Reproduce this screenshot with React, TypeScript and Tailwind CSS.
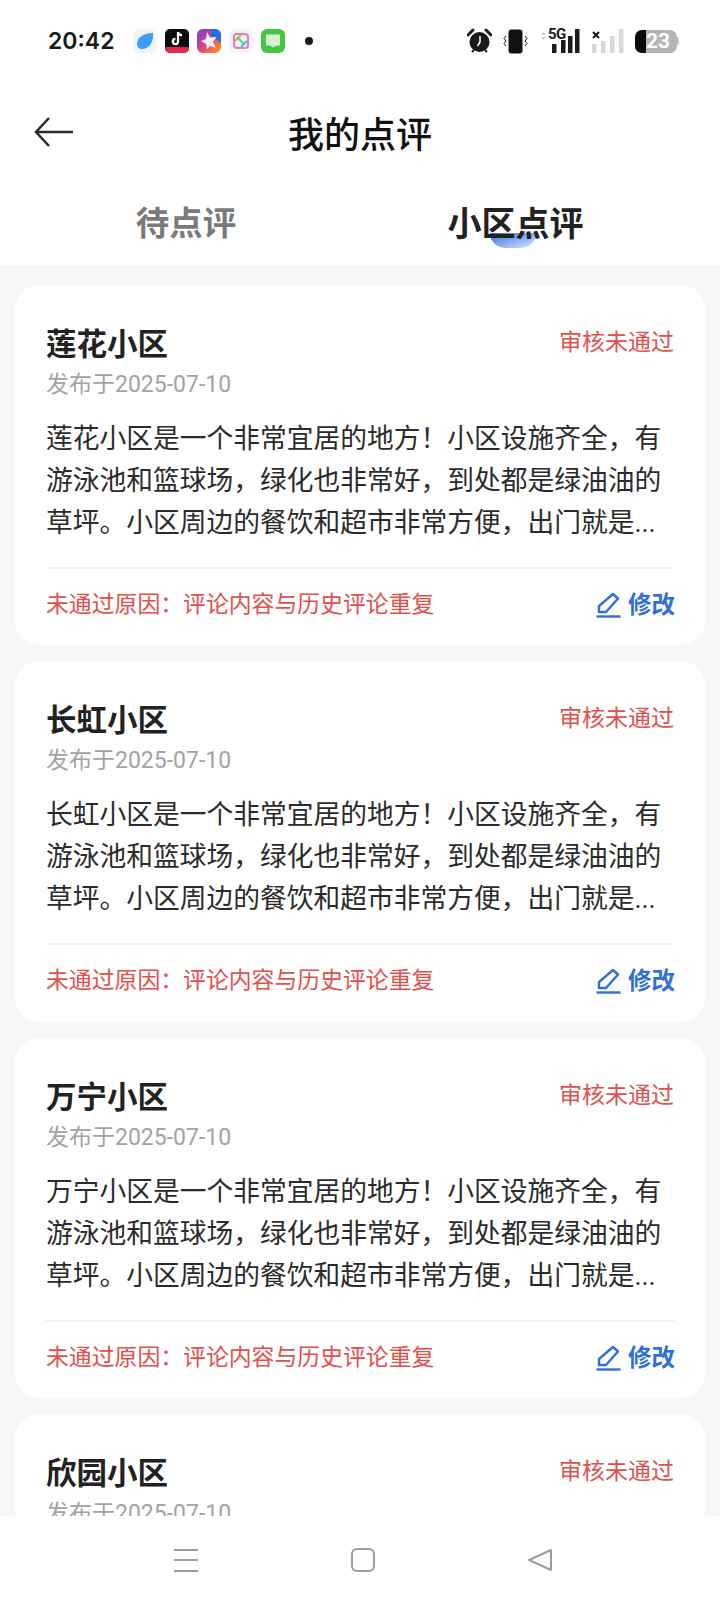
import React from 'react';

const sans = '[font-family:Roboto,"Noto_Sans_CJK_SC",sans-serif]';

const reviews = ['莲花小区', '长虹小区', '万宁小区', '欣园小区'];

// full-width punctuation, kept as escapes so it survives editing
const bang = '\uFF01';
const comma = '\uFF0C';
const colon = '\uFF1A';

function AppIcons() {
  return (
    <div className="flex items-center gap-[8px] ml-[19px]">
      {/* leaf */}
      <svg width="24" height="24" viewBox="0 0 24 24">
        <rect width="24" height="24" rx="6" fill="#f1f5f9" />
        <path d="M4 15C4 8 11 4 20 4c1 9-4 16-11 16-3 0-5-2-5-5z" fill="#3f9bf5" />
      </svg>
      {/* tiktok */}
      <svg width="24" height="24" viewBox="0 0 24 24">
        <rect width="24" height="24" rx="5" fill="#0b0b12" />
        <path d="M0 18h24v1a5 5 0 0 1-5 5H5a5 5 0 0 1-5-5z" fill="#e8264f" />
        <path d="M13 3v9.500a2.600 2.600 0 1 1-2.600-2.600M13 3c.4 2 1.800 3.200 4 3.400" fill="none" stroke="#fff" strokeWidth="2.200" />
      </svg>
      {/* star */}
      <svg width="24" height="24" viewBox="0 0 24 24">
        <defs>
          <linearGradient id="st" x1="0" y1="0" x2="1" y2="1">
            <stop offset="0" stopColor="#6a3be0" />
            <stop offset="0.500" stopColor="#e0447a" />
            <stop offset="1" stopColor="#ffa010" />
          </linearGradient>
        </defs>
        <rect width="24" height="24" rx="6" fill="url(#st)" />
        <path d="M24 6v8L14 6V0h4a6 6 0 0 1 6 6z" fill="#1f6fe8" />
        <path d="M10 3l3 5.500 6.500-.5-3.500 5 3 6-6-2-3 3-1-5-5-3 5-2z" fill="#f4f0f4" />
      </svg>
      {/* ring */}
      <svg width="24" height="24" viewBox="0 0 24 24">
        <rect width="24" height="24" rx="6" fill="#f4f3f9" />
        <rect x="5" y="5" width="14" height="14" rx="3" fill="none" stroke="#e879c0" strokeWidth="2" />
        <path d="M6 12l6-6" stroke="#f59e0b" strokeWidth="2" />
        <path d="M12 18l6-6" stroke="#38bdf8" strokeWidth="2" />
        <path d="M8 8l8 8" stroke="#4ade80" strokeWidth="2" />
      </svg>
      {/* messages */}
      <svg width="24" height="24" viewBox="0 0 24 24">
        <rect width="24" height="24" rx="6" fill="#46c744" />
        <path d="M5 5.500h14v11h-4l-3 2-3-2H5z" fill="#d9f2d6" />
      </svg>
      <span className="ml-[12px] w-[8px] h-[8px] rounded-full bg-[#1a1a1a]" />
    </div>
  );
}

function StatusIcons() {
  return (
    <div className="flex items-center">
      {/* alarm */}
      <svg width="25" height="26" viewBox="0 0 25 26">
        <circle cx="12.500" cy="14" r="10" fill="#1a1a1a" />
        <path d="M1 7l5-5M24 7l-5-5" stroke="#1a1a1a" strokeWidth="3" strokeLinecap="round" />
        <path d="M5 24l2-2M20 24l-2-2" stroke="#1a1a1a" strokeWidth="2" />
        <path d="M13 8v6l-2.500 4" fill="none" stroke="#fff" strokeWidth="1.500" />
      </svg>
      {/* vibrate */}
      <svg width="25" height="25" viewBox="0 0 25 25" className="ml-[11px]">
        <rect x="5.500" y="0.500" width="14" height="24" rx="3" fill="#111" />
        <path d="M3 7l-2 2.500 2 2.500-2 2.500 2 2.500M22 7l2 2.500-2 2.500 2 2.500-2 2.500" fill="none" stroke="#111" strokeWidth="1" />
      </svg>
      {/* 5G signal */}
      <div className="relative ml-[10px] w-[45px] h-[24px]">
        <svg width="45" height="24" viewBox="0 0 45 24" className="absolute inset-0">
          <path d="M3 6l2.500-3L8 6zM3 8l2.500 3L8 8z" fill="#ccc" />
          <rect x="14" y="15" width="4.500" height="9" rx="0.500" fill="#1a1a1a" />
          <rect x="23" y="11" width="4.500" height="13" rx="0.500" fill="#1a1a1a" />
          <rect x="30" y="7" width="4.500" height="17" rx="0.500" fill="#1a1a1a" />
          <rect x="37" y="0" width="4.500" height="24" rx="0.500" fill="#1a1a1a" />
        </svg>
        <span className="absolute left-[10px] top-[-3px] text-[15px] leading-[16px] font-bold text-[#1a1a1a] [font-family:Roboto,sans-serif] tracking-[-0.5px]">5G</span>
      </div>
      {/* no signal */}
      <svg width="32" height="25" viewBox="0 0 32 25" className="ml-[9px]">
        <path d="M1 3l6 6M7 3L1 9" stroke="#1a1a1a" strokeWidth="2" />
        <rect x="0" y="15" width="4.500" height="9" fill="#d8d8d8" />
        <rect x="9" y="12" width="4.500" height="12" fill="#d8d8d8" />
        <rect x="18" y="7" width="4.500" height="17" fill="#d8d8d8" />
        <rect x="27" y="0" width="4.500" height="24" fill="#d8d8d8" />
      </svg>
      {/* battery */}
      <div className="relative ml-[11px] flex items-center">
        <div className="relative w-[42px] h-[23px] rounded-[7px] bg-[#b5b5b5] overflow-hidden flex items-center">
          <div className="w-[11px] h-full bg-[#0a0a0a]" />
          <span className="text-[21px] leading-none font-bold text-white [font-family:Roboto,sans-serif]">23</span>
        </div>
        <div className="w-[2px] h-[8px] rounded-r bg-[#c4c4c4]" />
      </div>
    </div>
  );
}

function ReviewCard({ name }: { name: string }) {
  const body = `${name}是一个非常宜居的地方${bang}小区设施齐全${comma}有游泳池和篮球场${comma}绿化也非常好${comma}到处都是绿油油的草坪。小区周边的餐饮和超市非常方便${comma}出门就是...`;
  return (
    <div className="bg-white rounded-[24px] px-[30px] shrink-0 h-[360.400px]">
      <div className="flex justify-between items-start pt-[38px]">
        <h3 className="text-[30.500px] leading-[44px] font-bold text-[#222] pl-[1px]">{name}</h3>
        <span className="text-[23px] leading-[34px] text-[#e2504a] pr-[1px] mt-[3px]">审核未通过</span>
      </div>
      <p className="text-[23px] leading-[36px] text-[#a3a3a3] pl-[1px]">发布于2025-07-10</p>
      <p className="text-[26.750px] leading-[42px] text-[#2b2b2b] mt-[15px] pl-[1px]">{body}</p>
      <div className="flex justify-between items-center border-t-2 border-[#f3f3f3] mt-[23px] pt-[18px]">
        <span className="text-[22.850px] leading-[36px] text-[#e2504a] pl-[1px]">{`未通过原因${colon}评论内容与历史评论重复`}</span>
        <span className="flex items-center text-[23.500px] leading-[36px] font-bold text-[#2f6fdc]">
          <svg width="25" height="26" viewBox="0 0 25 26" className="mr-[7px]" fill="none" stroke="#2f6fdc" strokeWidth="2.400" strokeLinejoin="round">
            <path d="M17 2l5 4.500L10 20H3v-6z" />
            <path d="M0.500 24.500h24" />
          </svg>
          修改
        </span>
      </div>
    </div>
  );
}

export default function App() {
  return (
    <div lang="zh-CN" className={`w-[720px] h-[1604px] flex flex-col overflow-hidden bg-white ${sans}`}>
      {/* status bar */}
      <div className="h-[80px] shrink-0 flex items-center justify-between pl-[48px] pr-[41px] pt-[2px]">
        <div className="flex items-center">
          <span className="text-[23px] font-semibold text-[#1a1a1a] [font-family:Inter,sans-serif]">20:42</span>
          <AppIcons />
        </div>
        <StatusIcons />
      </div>

      {/* title */}
      <div className="relative h-[105px] shrink-0 flex items-center justify-center">
        <svg width="40" height="32" viewBox="0 0 40 32" className="absolute left-[34px] top-[36px]">
          <path d="M39 16H2M15 2L2 16l13 14" fill="none" stroke="#2a2a2a" strokeWidth="2.500" />
        </svg>
        <h1 className="text-[36px] font-medium text-[#111] mt-[6px]">我的点评</h1>
      </div>

      {/* tabs */}
      <div className="h-[80px] shrink-0 flex">
        <div className="w-[372px] flex justify-center pt-[15px]">
          <span className="text-[33.500px] leading-[48px] font-bold text-[#7a7a7a]">待点评</span>
        </div>
        <div className="flex-1 flex justify-center pt-[15px] pr-[61px]">
          <span className="relative text-[34px] leading-[48px] font-bold text-[#222]">
            <span className="absolute left-[42px] top-[33px] w-[46px] h-[15px] rounded-b-full bg-gradient-to-br from-[#2f6bdc] to-[#dbe6fb]" />
            <span className="relative">小区点评</span>
          </span>
        </div>
      </div>

      {/* list */}
      <div className="flex-1 min-h-0 overflow-hidden bg-[#f7f7f7] px-[15px] pt-[20px] flex flex-col gap-[16px]">
        {reviews.map((name) => (
          <ReviewCard key={name} name={name} />
        ))}
      </div>

      {/* nav */}
      <div className="h-[88px] shrink-0 bg-white flex items-start pt-[31px] justify-between pl-[173px] pr-[167px]">
        <svg width="26" height="26" viewBox="0 0 26 26">
          <path d="M1 3h24M1 13h24M1 24h24" stroke="#9c9c9c" strokeWidth="2" />
        </svg>
        <svg width="26" height="26" viewBox="0 0 26 26">
          <rect x="2" y="2" width="22" height="22" rx="5" fill="none" stroke="#9c9c9c" strokeWidth="2" />
        </svg>
        <svg width="26" height="26" viewBox="0 0 26 26">
          <path d="M24 3v20L2 13z" fill="none" stroke="#9c9c9c" strokeWidth="2" strokeLinejoin="round" />
        </svg>
      </div>
    </div>
  );
}
